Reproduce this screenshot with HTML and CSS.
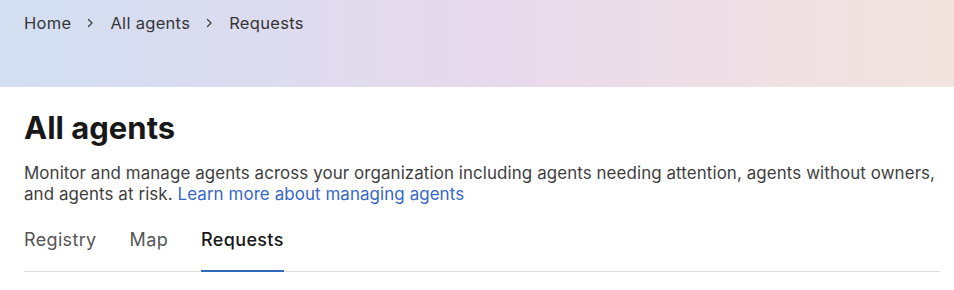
FILE: index.html
```html
<!DOCTYPE html>
<html lang="en">
<head>
<meta charset="utf-8">
<title>All agents</title>
<link rel="stylesheet" href="styles.css">
</head>
<body>
<header class="hero">
  <nav class="crumbs" aria-label="Breadcrumb">
    <a class="crumb" href="#">Home</a>
    <span class="sep" aria-hidden="true"><svg width="7" height="10" viewBox="0 0 7 10"><path d="M1.5 1.5 L5 5 L1.5 8.5" fill="none" stroke="#3a3a3a" stroke-width="1.2" stroke-linecap="round" stroke-linejoin="round"/></svg></span>
    <a class="crumb" href="#">All agents</a>
    <span class="sep" aria-hidden="true"><svg width="7" height="10" viewBox="0 0 7 10"><path d="M1.5 1.5 L5 5 L1.5 8.5" fill="none" stroke="#3a3a3a" stroke-width="1.2" stroke-linecap="round" stroke-linejoin="round"/></svg></span>
    <span class="crumb current">Requests</span>
  </nav>
</header>
<main class="content">
  <h1 class="title">All agents</h1>
  <p class="desc">Monitor and manage agents across your organization including agents needing attention, agents without owners, and agents at risk. <a class="link" href="#">Learn more about managing agents</a></p>
  <div class="tabs" role="tablist">
    <a class="tab" href="#">Registry</a>
    <a class="tab" href="#">Map</a>
    <a class="tab active" href="#">Requests</a>
  </div>
</main>
</body>
</html>
```

FILE: styles.css
```css
* { box-sizing: border-box; }
html, body { margin: 0; padding: 0; background: #ffffff; }
body {
  font-family: Inter, "Open Sans", "Liberation Sans", sans-serif;
  color: #2b2b2b;
}
.hero {
  height: 87px;
  background: linear-gradient(90deg, #d1dff1 0%, #dcdcef 25%, #e6d9ec 50%, #eedfe6 75%, #f3e4df 100%);
  padding: 12px 24px 0;
}
.crumbs {
  display: flex;
  align-items: center;
  font-size: 16.5px;
  line-height: 22px;
  letter-spacing: 0.3px;
}
.crumb { color: #353535; text-decoration: none; }
.sep { display: inline-flex; width: 7px; margin: 0 16px; justify-content: center; align-items: center; }
.content { padding: 0 14px 0 24px; }
.title {
  margin: 23px 0 0;
  font-size: 31px;
  line-height: 36px;
  font-weight: 700;
  color: #181818;
}
.desc {
  margin: 17px 0 0;
  font-size: 16.9px;
  line-height: 21px;
  letter-spacing: 0.1px;
  color: #3e3e3e;
}
.link { color: #3468c8; text-decoration: none; }
.tabs {
  margin-top: 19px;
  display: flex;
  gap: 33px;
  border-bottom: 1px solid #e0e0e0;
}
.tab {
  font-size: 18px;
  line-height: 24px;
  letter-spacing: 0.35px;
  padding: 4px 0 18px;
  color: #555555;
  text-decoration: none;
  border-bottom: 3px solid transparent;
  margin-bottom: -2px;
}
.tab.active { color: #181818; font-weight: 500; border-bottom-color: #2f69bd; }
```
